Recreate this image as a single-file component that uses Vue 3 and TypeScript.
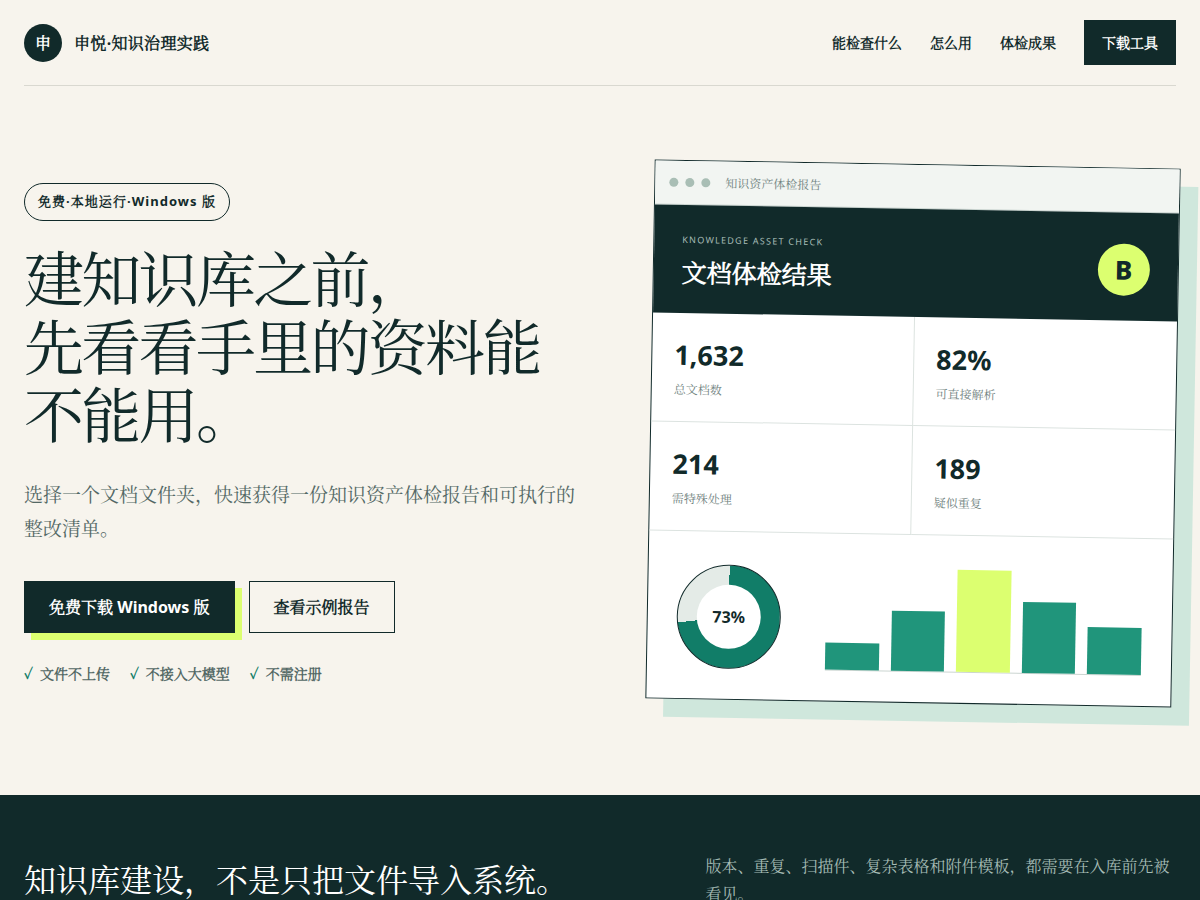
<script setup lang="ts">
interface Stat {
  value: string
  label: string
}

interface Bar {
  height: number
  accent?: boolean
}

const navLinks: string[] = ['能检查什么', '怎么用', '体检成果']
const promises: string[] = ['文件不上传', '不接入大模型', '不需注册']
const stats: Stat[] = [
  { value: '1,632', label: '总文档数' },
  { value: '82%', label: '可直接解析' },
  { value: '214', label: '需特殊处理' },
  { value: '189', label: '疑似重复' },
]
const bars: Bar[] = [
  { height: 25 },
  { height: 55 },
  { height: 93, accent: true },
  { height: 65 },
  { height: 43 },
]
</script>

<template>
  <div class="page" lang="zh-CN">
    <div class="wrap">
      <header class="top">
        <a class="brand" href="#">
          <span class="mark">申</span>
          <span class="brand-name">申悦·知识治理实践</span>
        </a>
        <nav class="nav">
          <a v-for="link in navLinks" :key="link" href="#">{{ link }}</a>
          <a class="nav-cta" href="#">下载工具</a>
        </nav>
      </header>

      <main class="hero">
        <div class="copy">
          <span class="pill">免费·本地运行·Windows 版</span>
          <h1>建知识库之前，<br />先看看手里的资料能不能用。</h1>
          <p class="lead">选择一个文档文件夹，快速获得一份知识资产体检报告和可执行的整改清单。</p>
          <div class="actions">
            <a class="btn primary" href="#">免费下载 Windows 版</a>
            <a class="btn" href="#">查看示例报告</a>
          </div>
          <ul class="promises">
            <li v-for="item in promises" :key="item">{{ item }}</li>
          </ul>
        </div>

        <section class="report" aria-label="知识资产体检报告">
          <div class="bar-top">
            <i></i><i></i><i></i>
            <span>知识资产体检报告</span>
          </div>
          <div class="report-head">
            <div>
              <small>KNOWLEDGE ASSET CHECK</small>
              <h2>文档体检结果</h2>
            </div>
            <div class="grade">B</div>
          </div>
          <div class="stats">
            <div v-for="stat in stats" :key="stat.label" class="stat">
              <strong>{{ stat.value }}</strong>
              <span>{{ stat.label }}</span>
            </div>
          </div>
          <div class="charts">
            <div class="donut"><span>73%</span></div>
            <div class="bars">
              <div
                v-for="(bar, i) in bars"
                :key="i"
                :class="{ accent: bar.accent }"
                :style="{ height: bar.height + '%' }"
              ></div>
            </div>
          </div>
        </section>
      </main>
    </div>

    <section class="band">
      <div class="wrap band-grid">
        <h2>知识库建设，不是只把文件导入系统。</h2>
        <p>版本、重复、扫描件、复杂表格和附件模板，都需要在入库前先被看见。</p>
      </div>
    </section>
  </div>
</template>

<style>
body {
  margin: 0;
  background: #f7f4ed;
}
</style>

<style scoped>
.page {
  --ink: #112a2a;
  --lime: #dcff70;
  --green: #117d68;
  color: var(--ink);
  font-family: "Noto Sans", "Noto Serif CJK SC", serif;
  font-size: 16px;
  line-height: 26px;
  overflow: hidden;
}

.page * {
  box-sizing: border-box;
}

.brand,
.nav,
.pill,
.btn,
.promises,
.report-head h2 {
  font-family: "Noto Sans", "Noto Serif CJK SC Light", "Noto Serif CJK SC", serif;
}

a {
  color: inherit;
  text-decoration: none;
}

h1,
h2,
p,
ul {
  margin: 0;
  padding: 0;
}

.wrap {
  max-width: 1200px;
  margin: 0 auto;
  padding: 0 24px;
}

.top {
  display: flex;
  align-items: center;
  justify-content: space-between;
  height: 86px;
  border-bottom: 1px solid #d9d8d0;
}

.brand {
  display: flex;
  align-items: center;
  gap: 12px;
  font-weight: 700;
}

.brand-name {
  letter-spacing: 0.02em;
}

.mark {
  display: grid;
  place-items: center;
  width: 38px;
  height: 38px;
  border-radius: 50%;
  background: var(--ink);
  color: #fff;
}

.nav {
  display: flex;
  align-items: center;
  gap: 28px;
  font-size: 14px;
  line-height: 23px;
  font-weight: 600;
}

.nav-cta {
  padding: 11px 18px;
  background: var(--ink);
  color: #fff;
}

.hero {
  display: grid;
  grid-template-columns: 1.05fr 1fr;
  align-items: center;
  gap: 74px;
  padding: 78px 0 92px;
}

.pill {
  display: inline-block;
  padding: 6px 13px 8px;
  border: 1px solid var(--ink);
  border-radius: 19px;
  font-size: 13px;
  line-height: 22px;
  font-weight: 700;
  letter-spacing: 0.08em;
}

h1 {
  margin-top: 24px;
  font-size: 60px;
  line-height: 68px;
  font-weight: 400;
  letter-spacing: -0.045em;
}

.lead {
  margin-top: 29px;
  color: #536865;
  font-size: 19px;
  line-height: 34px;
}

.actions {
  display: flex;
  gap: 14px;
  margin-top: 35px;
}

.btn {
  padding: 12px 24px;
  border: 1px solid var(--ink);
  font-weight: 700;
}

.primary {
  background: var(--ink);
  color: #fff;
  box-shadow: 7px 7px 0 var(--lime);
}

.promises {
  display: flex;
  gap: 20px;
  margin-top: 30px;
  list-style: none;
  color: #536865;
  font-size: 14px;
  line-height: 22px;
  font-weight: 600;
}

.promises li::before {
  content: "✓";
  margin-right: 7px;
  color: var(--green);
}

.report {
  border: 1px solid var(--ink);
  background: #fff;
  box-shadow: 18px 18px 0 #cfe7dc;
  transform: rotate(1deg);
}

.bar-top {
  display: flex;
  align-items: center;
  gap: 7px;
  height: 44px;
  padding: 0 14px;
  border-bottom: 1px solid #cbd5d1;
  background: #f2f5f2;
  color: #6f827e;
  font-size: 12px;
}

.bar-top i {
  width: 9px;
  height: 9px;
  border-radius: 50%;
  background: #a9beb5;
}

.bar-top span {
  margin-left: 8px;
}

.report-head {
  display: flex;
  align-items: center;
  justify-content: space-between;
  height: 108px;
  padding: 6px 28px 0;
  background: var(--ink);
  color: #fff;
}

.report-head small {
  display: block;
  color: #a5bbb5;
  font-size: 9px;
  line-height: 14px;
  letter-spacing: 0.14em;
}

.report-head h2 {
  margin-top: 5px;
  font-size: 25px;
  line-height: 40px;
  font-weight: 700;
}

.grade {
  display: grid;
  place-items: center;
  width: 52px;
  height: 52px;
  border-radius: 50%;
  background: var(--lime);
  color: var(--ink);
  font-size: 26px;
  font-weight: 800;
}

.stats {
  display: grid;
  grid-template-columns: 1fr 1fr;
}

.stat {
  padding: 20px 22px 21px;
  border-bottom: 1px solid #dce3e0;
}

.stat:nth-child(odd) {
  border-right: 1px solid #dce3e0;
}

.stat strong {
  display: block;
  font-size: 27px;
  line-height: 44px;
}

.stat span {
  display: block;
  margin-top: 3px;
  color: #6f827e;
  font-size: 12px;
  line-height: 20px;
}

.charts {
  display: grid;
  grid-template-columns: 104px 1fr;
  align-items: end;
  gap: 45px;
  padding: 26px 30px 30px 29px;
}

.donut {
  display: grid;
  place-items: center;
  width: 104px;
  height: 104px;
  border: 1px solid var(--ink);
  border-radius: 50%;
  background: conic-gradient(var(--green) 73%, #e4ebe7 0);
}

.donut span {
  display: grid;
  place-items: center;
  width: 64px;
  height: 64px;
  border-radius: 50%;
  background: #fff;
  font-weight: 700;
}

.bars {
  display: flex;
  align-items: flex-end;
  gap: 12px;
  height: 111px;
  border-bottom: 1px solid #cbd5d1;
}

.bars div {
  flex: 1;
  background: #20957b;
}

.bars .accent {
  background: var(--lime);
}

.band {
  padding: 57px 0 64px;
  background: var(--ink);
  color: #fff;
}

.band-grid {
  display: grid;
  grid-template-columns: 1.3fr 1fr;
  gap: 70px;
  align-items: center;
}

.band h2 {
  font-size: 32px;
  line-height: 42px;
  font-weight: 400;
}

.band p {
  color: #a5bbb5;
  line-height: 28px;
}
</style>
